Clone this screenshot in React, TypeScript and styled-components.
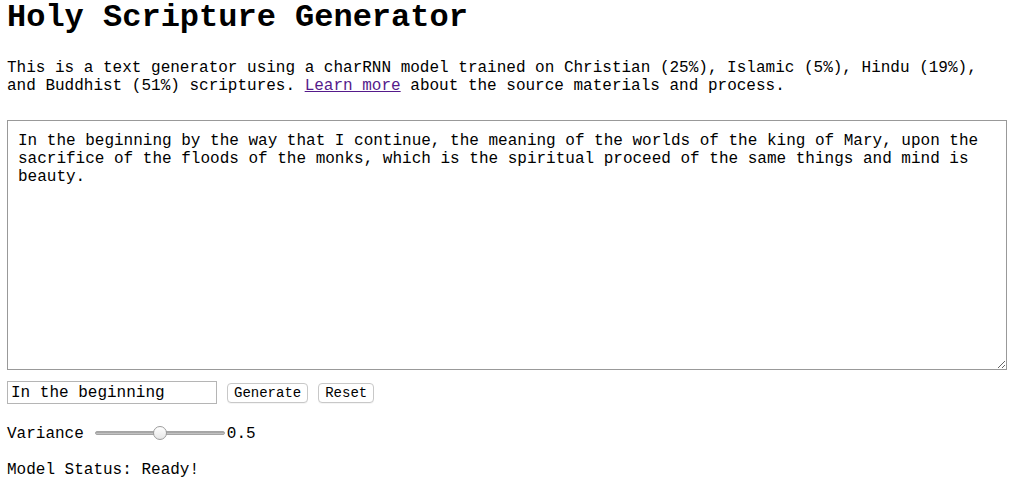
import React from "react";
import styled, { createGlobalStyle } from "styled-components";

const Global = createGlobalStyle`
  html, body { margin: 0; padding: 0; background: #fff; }
  body {
    padding: 0 8px 0 7px;
    font-family: "Liberation Mono", "Courier New", monospace;
    font-size: 16px;
    color: #000;
  }
`;

const Page = styled.div`
  display: flex;
  flex-direction: column;
`;

const Title = styled.h1`
  margin: 0;
  font-size: 32px;
  font-weight: bold;
  line-height: 36px;
`;

const Intro = styled.p`
  margin: 23px 0 0;
  line-height: 18px;
`;

const Link = styled.a`
  color: #551a8b;
  text-decoration: underline;
`;

const Output = styled.textarea`
  box-sizing: border-box;
  margin: 25px 0 0;
  width: 1000px;
  height: 250px;
  padding: 11px 10px;
  border: 1px solid #999;
  font-family: "Liberation Mono", "Courier New", monospace;
  font-size: 16px;
  line-height: 18px;
  color: #000;
  outline: none;
`;

const Controls = styled.div`
  display: flex;
  align-items: center;
  gap: 10px;
  margin-top: 11px;
  height: 23px;
`;

const SeedInput = styled.input`
  box-sizing: border-box;
  width: 210px;
  height: 23px;
  padding: 1px 3px;
  border: 1px solid #b5b5b5;
  font-family: "Liberation Mono", "Courier New", monospace;
  font-size: 16px;
  color: #000;
  outline: none;
`;

const Button = styled.button`
  box-sizing: border-box;
  height: 20px;
  padding: 0 6px;
  border: 1px solid #c8c8c8;
  border-radius: 4px;
  background: #fff;
  font-family: "Liberation Mono", "Courier New", monospace;
  font-size: 14px;
  line-height: 18px;
  color: #000;
  box-shadow: 0 1px 0 rgba(0,0,0,0.04);
`;

const SliderRow = styled.div`
  display: flex;
  align-items: center;
  margin-top: 21px;
  height: 18px;
  line-height: 18px;
`;

const Range = styled.input`
  -webkit-appearance: none;
  appearance: none;
  width: 130px;
  height: 16px;
  margin: 0 2px 0 11px;
  background: transparent;
  position: relative;
  top: -1px;

  &::-webkit-slider-runnable-track {
    height: 4px;
    border-radius: 2px;
    background: linear-gradient(#9a9a9a, #cfcfcf);
    border: 1px solid #a5a5a5;
    box-sizing: border-box;
  }
  &::-webkit-slider-thumb {
    -webkit-appearance: none;
    width: 14px;
    height: 14px;
    margin-top: -6px;
    border-radius: 50%;
    border: 1px solid #9c9c9c;
    background: linear-gradient(#ffffff, #e6e6e6);
    box-sizing: border-box;
  }
`;

const Status = styled.div`
  margin-top: 18px;
  line-height: 18px;
`;

export default function App() {
  const text =
    "In the beginning by the way that I continue, the meaning of the worlds of the king of Mary, upon the sacrifice of the floods of the monks, which is the spiritual proceed of the same things and mind is beauty.";
  return (
    <Page>
      <Global />
      <Title>Holy Scripture Generator</Title>
      <Intro>
        This is a text generator using a charRNN model trained on Christian (25%), Islamic (5%), Hindu (19%),
        and Buddhist (51%) scriptures. <Link href="#">Learn more</Link> about the source materials and process.
      </Intro>
      <Output defaultValue={text} />
      <Controls>
        <SeedInput defaultValue="In the beginning" />
        <Button>Generate</Button>
        <Button>Reset</Button>
      </Controls>
      <SliderRow>
        <span>Variance</span>
        <Range type="range" min={0} max={1} step={0.1} defaultValue={0.5} />
        <span>0.5</span>
      </SliderRow>
      <Status>Model Status: Ready!</Status>
    </Page>
  );
}
